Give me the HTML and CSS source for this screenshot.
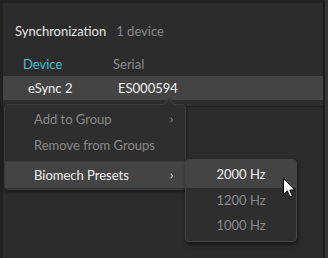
FILE: index.html
```html
<!DOCTYPE html>
<html>
<head>
<meta charset="utf-8">
<link rel="stylesheet" href="styles.css">
</head>
<body>
<div class="window">
  <div class="panel">
    <div class="title">
      <span class="title-main">Synchronization</span>
      <span class="title-sub">1 device</span>
    </div>
    <div class="table">
      <div class="thead">
        <span class="col col-device active">Device</span>
        <span class="col">Serial</span>
      </div>
      <div class="trow selected">
        <span class="col col-device">eSync 2</span>
        <span class="col">ES000594</span>
      </div>
      <div class="tend"></div>
    </div>

    <div class="menu">
      <div class="notch"></div>
      <div class="item disabled">Add to Group<span class="chev dim">&#x203A;</span></div>
      <div class="item disabled">Remove from Groups</div>
      <div class="sep"></div>
      <div class="item hot">Biomech Presets<span class="chev">&#x203A;</span></div>
    </div>

    <div class="submenu">
      <div class="sitem hot first">2000 Hz</div>
      <div class="sitem disabled">1200 Hz</div>
      <div class="sitem disabled">1000 Hz</div>
    </div>

    <svg class="cursor" width="13" height="20" viewBox="0 0 13 20">
      <path d="M0.5 0.5 L0.5 16.5 L4.3 12.8 L7 19 L9.3 18 L6.7 12 L11.8 12 Z" fill="#fff" stroke="#000" stroke-width="1" stroke-linejoin="miter"/>
    </svg>
  </div>
  <div class="edge"></div>
</div>
</body>
</html>
```

FILE: styles.css
```css
html, body {
  margin: 0;
  padding: 0;
}
body {
  width: 328px;
  height: 258px;
  overflow: hidden;
  background: #2b2b2b;
  font-family: Lato, "Open Sans", sans-serif;
  font-size: 13px;
  color: #e8e8e8;
}
.window {
  display: flex;
  height: 258px;
}
.panel {
  position: relative;
  flex: 1;
  background: #2c2c2c;
  border-left: 3px solid #212121;
  border-top: 3px solid #232323;
  border-right: 2px solid #1d1d1d;
}
.edge {
  width: 3px;
  background: #373737;
}
.title {
  margin-top: 20px;
  padding-left: 12px;
  line-height: 16px;
  display: flex;
  gap: 10px;
}
.title-main {
  color: #e6e6e6;
}
.title-sub {
  color: #8a8a8a;
}
.table {
  margin-top: 17px;
}
.thead {
  display: flex;
  padding-left: 20px;
  line-height: 16px;
  height: 20px;
  color: #8a8a8a;
}
.col-device {
  width: 90px;
}
.active {
  color: #39c3d3;
}
.trow {
  display: flex;
  padding-left: 25px;
  height: 24px;
  line-height: 24px;
  color: #f2f2f2;
}
.selected {
  background: #444444;
}
.tend {
  height: 6px;
  background: #2e2e2e;
  border-bottom: 1px solid #222222;
}
.menu {
  position: absolute;
  left: 1px;
  top: 101px;
  width: 180px;
  padding: 1px 0;
  background: #2e2e2e;
  border: 1px solid #3c3c3c;
  border-radius: 4px;
  box-shadow: 0 2px 4px rgba(0, 0, 0, 0.45);
}
.notch {
  position: absolute;
  left: 160px;
  top: -5px;
  width: 8px;
  height: 8px;
  box-sizing: border-box;
  background: #2e2e2e;
  border-left: 1px solid #3c3c3c;
  border-top: 1px solid #3c3c3c;
  transform: rotate(45deg);
}
.item {
  position: relative;
  height: 26px;
  line-height: 26px;
  padding-left: 29px;
}
.disabled {
  color: #8a8a8a;
}
.hot {
  background: #444444;
  color: #f2f2f2;
}
.sep {
  height: 4px;
  box-sizing: border-box;
  border-bottom: 1px solid #3a3a3a;
  margin-bottom: 0;
}
.chev {
  position: absolute;
  left: 165px;
  top: 0;
  font-size: 12px;
  color: #f0f0f0;
}
.chev.dim {
  color: #a0a0a0;
}
.submenu {
  position: absolute;
  left: 182px;
  top: 156px;
  width: 110px;
  padding-bottom: 3px;
  background: #2e2e2e;
  border: 1px solid #434343;
  border-radius: 4px;
  box-shadow: 1px 3px 4px rgba(0, 0, 0, 0.5);
  overflow: hidden;
}
.sitem {
  text-align: center;
  height: 25px;
  line-height: 25px;
}
.sitem.first {
  height: 27px;
  line-height: 27px;
  padding-top: 1px;
}
.cursor {
  position: absolute;
  left: 280px;
  top: 175px;
}
```
